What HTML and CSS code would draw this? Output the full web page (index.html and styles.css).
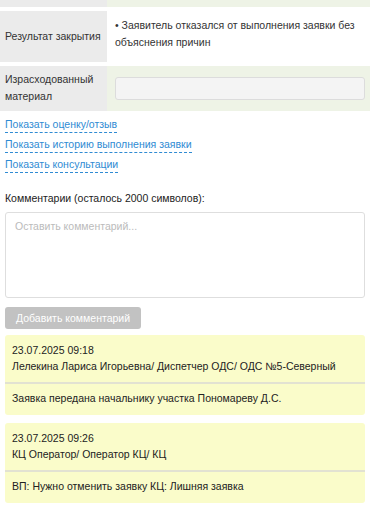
FILE: index.html
```html
<!DOCTYPE html>
<html lang="ru">
<head>
    <meta charset="UTF-8">
    <meta name="viewport" content="width=device-width, initial-scale=1.0">
    <title>Заявка</title>
    <link rel="stylesheet" href="styles.css">
</head>
<body>
    <table class="info">
        <tr class="row-cut">
            <td class="label"></td>
            <td class="value green"></td>
        </tr>
        <tr class="row-result">
            <td class="label">Результат закрытия</td>
            <td class="value">• Заявитель отказался от выполнения заявки без объяснения причин</td>
        </tr>
        <tr>
            <td class="label">Израсходованный материал</td>
            <td class="value green"><input class="field" type="text"></td>
        </tr>
    </table>

    <div class="links">
        <div><a href="#">Показать оценку/отзыв</a></div>
        <div><a href="#">Показать историю выполнения заявки</a></div>
        <div><a href="#">Показать консультации</a></div>
    </div>

    <div class="comment-form">
        <div class="comment-title">Комментарии (осталось 2000 символов):</div>
        <textarea class="comment-input" placeholder="Оставить комментарий..."></textarea>
        <button class="add-btn" disabled>Добавить комментарий</button>
    </div>

    <div class="comments">
        <div class="comment">
            <div class="comment-head">
                <div>23.07.2025 09:18</div>
                <div>Лелекина Лариса Игорьевна/ Диспетчер ОДС/ ОДС №5-Северный</div>
            </div>
            <div class="comment-text">Заявка передана начальнику участка Пономареву Д.С.</div>
        </div>
        <div class="comment">
            <div class="comment-head">
                <div>23.07.2025 09:26</div>
                <div>КЦ Оператор/ Оператор КЦ/ КЦ</div>
            </div>
            <div class="comment-text">ВП: Нужно отменить заявку КЦ: Лишняя заявка</div>
        </div>
    </div>
</body>
</html>
```

FILE: styles.css
```css
body { margin: 0; font-family: "Liberation Sans", Arial, sans-serif; font-size: 10.5px; color: #333; background: #fff; }

.info { width: 100%; border-collapse: separate; border-spacing: 0 4px; margin-top: -4px; }
.info td { line-height: 17px; }
.info td.label { width: 97px; padding: 5px 5px 6px; background: #ebebeb; vertical-align: middle; }
.info td.value { padding: 6px 8px 11px 8px; background: #fff; vertical-align: top; }
.info td.green { background: #eef3e6; padding: 5px 5px 5px 8px; vertical-align: middle; }
.info .row-cut td { height: 7px; padding: 0; line-height: 0; font-size: 0; }
.field {
    display: block;
    width: 100%;
    height: 23px;
    box-sizing: border-box;
    background: #f4f4f4;
    border: 1px solid #dcdcdc;
    border-radius: 3px;
    margin: 0;
}

.links { margin: 1px 0 0 5px; }
.links div { height: 17px; margin-bottom: 3px; }
.links a {
    color: #2f8bd3;
    text-decoration: none;
    line-height: 16px;
    display: inline-block;
    border-bottom: 1px dashed #2f8bd3;
}

.comment-form { padding: 0 5px; }
.comment-title { margin-top: 17px; line-height: 16px; color: #222; }
.comment-input {
    display: block;
    width: 100%;
    height: 86px;
    box-sizing: border-box;
    margin-top: 6px;
    padding: 7px 9px;
    border: 1px solid #dedede;
    border-radius: 3px;
    font-family: inherit;
    font-size: 10.5px;
    resize: none;
}
.comment-input::placeholder { color: #bbb; }
.add-btn {
    margin-top: 9px;
    height: 22px;
    padding: 0 11px;
    background: #c2c2c2;
    color: #fff;
    border: none;
    border-radius: 3px;
    font-family: inherit;
    font-size: 10.5px;
}

.comments { padding: 0 5px; margin-top: 6px; }
.comment { background: #fafcca; border-radius: 3px; margin-bottom: 8px; color: #222; }
.comment-head { padding: 7px 7px 8px; line-height: 16px; border-bottom: 2px solid #e2e2d2; }
.comment-text { padding: 6px 7px 9px; line-height: 16px; }
```
